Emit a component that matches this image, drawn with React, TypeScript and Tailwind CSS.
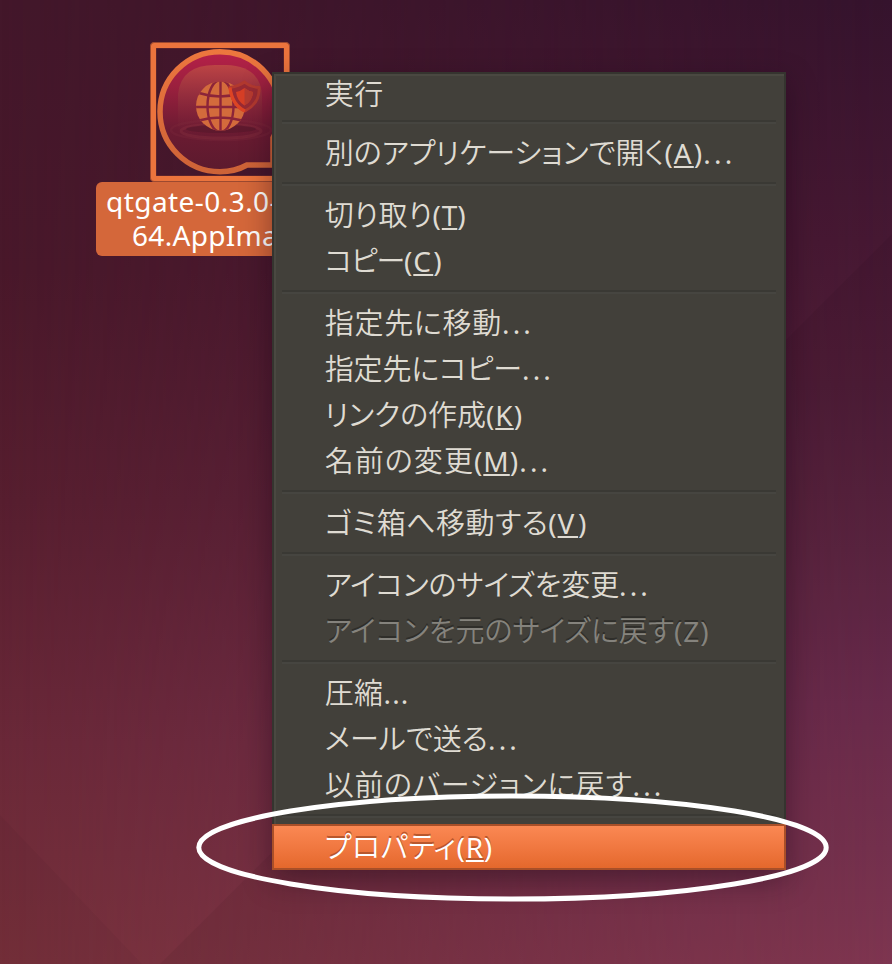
import { useLayoutEffect, useRef } from "react";

type Row = {
  jp: string;
  end: number;
  key?: string;
  keyWidth?: number;
  dots?: "wide" | "tight";
  state?: "first" | "disabled" | "active";
};

const TEXT_LEFT = 324.7;

const groups: Row[][] = [
  [{ jp: "実行", end: 384, state: "first" }],
  [{ jp: "別のアプリケーションで開く", end: 664.5, key: "A", keyWidth: 20, dots: "wide" }],
  [
    { jp: "切り取り", end: 432.5, key: "T", keyWidth: 15.5 },
    { jp: "コピー", end: 404, key: "C", keyWidth: 20 },
  ],
  [
    { jp: "指定先に移動", end: 502, dots: "wide" },
    { jp: "指定先にコピー", end: 522, dots: "wide" },
    { jp: "リンクの作成", end: 486, key: "K", keyWidth: 18.5 },
    { jp: "名前の変更", end: 474, key: "M", keyWidth: 26.5, dots: "wide" },
  ],
  [{ jp: "ゴミ箱へ移動する", end: 548.3, key: "V", keyWidth: 20.5 }],
  [
    { jp: "アイコンのサイズを変更", end: 619, dots: "wide" },
    { jp: "アイコンを元のサイズに戻す", end: 674, key: "Z", keyWidth: 17, state: "disabled" },
  ],
  [
    { jp: "圧縮", end: 383.5, dots: "tight" },
    { jp: "メールで送る", end: 488, dots: "wide" },
    { jp: "以前のバージョンに戻す", end: 632.5, dots: "wide" },
  ],
  [{ jp: "プロパティ", end: 456.5, key: "R", keyWidth: 18, state: "active" }],
];

/* Spreads its characters evenly so that the run takes up the given width. */
function Fit({ text, width, className = "" }: { text: string; width: number; className?: string }) {
  const ref = useRef<HTMLSpanElement>(null);
  useLayoutEffect(() => {
    const el = ref.current;
    if (!el) return;
    const apply = () => {
      el.style.letterSpacing = "0px";
      const natural = el.getBoundingClientRect().width;
      el.style.letterSpacing = `${(width - natural) / text.length}px`;
    };
    apply();
    document.fonts.ready.then(apply);
  }, [text, width]);
  return (
    <span ref={ref} className={`inline-block whitespace-nowrap ${className}`}>
      {text}
    </span>
  );
}

const latin = "font-['Noto_Sans',sans-serif] text-[28px]";

function MenuRow({ row }: { row: Row }) {
  const tone =
    row.state === "disabled"
      ? "text-[#85837d] [text-shadow:0_-2px_0_#2f2e2a]"
      : row.state === "active"
        ? "text-white border-2 border-[#a94f28] bg-linear-to-b from-[#fb8853] to-[#e5682c] [text-shadow:0_-2px_0_#b9572c]"
        : "text-[#dfdbd2]";
  const box =
    row.state === "active"
      ? "h-[46px] pl-[50.7px] leading-[39px]"
      : row.state === "first"
        ? "h-[42px] pl-[52.7px] leading-[40px]"
        : "h-[46px] pl-[52.7px] leading-[43px]";
  return (
    <div className={`flex shrink-0 items-baseline ${box} ${tone}`}>
      <Fit
        text={row.jp}
        width={row.end - TEXT_LEFT}
        className="font-['Noto_Sans_CJK_JP',sans-serif] text-[29px] font-[350] [font-feature-settings:'palt']"
      />
      {row.key && (
        <>
          <Fit text="(" width={9.3} className={latin} />
          <Fit
            text={row.key}
            width={row.keyWidth ?? 18}
            className={`${latin} ${row.state === "disabled" ? "" : "underline decoration-2 underline-offset-[2px] [text-decoration-skip-ink:none]"}`}
          />
          <Fit text=")" width={9.5} className={latin} />
        </>
      )}
      {row.dots === "wide" && <Fit text="..." width={32} className={latin} />}
      {row.dots === "tight" && <Fit text="..." width={26} className={latin} />}
    </div>
  );
}

function Separator() {
  return (
    <div className="flex h-4 shrink-0 flex-col px-[10px] pt-[6px]">
      <div className="h-[2px] bg-[#3a3934]" />
      <div className="h-[2px] bg-[#464540]" />
    </div>
  );
}

function AppIcon() {
  return (
    <svg className="absolute left-[150px] top-[42px]" width="140" height="140" viewBox="150 42 140 140" fill="none">
      <defs>
        <linearGradient id="disc" x1="0" y1="48" x2="0" y2="175" gradientUnits="userSpaceOnUse">
          <stop offset="0" stopColor="#b9204a" />
          <stop offset="0.3" stopColor="#9b203e" />
          <stop offset="0.65" stopColor="#6b1b32" />
          <stop offset="1" stopColor="#5a1a2d" />
        </linearGradient>
        <linearGradient id="dome" x1="0" y1="64" x2="0" y2="136" gradientUnits="userSpaceOnUse">
          <stop offset="0" stopColor="#bd4545" />
          <stop offset="0.45" stopColor="#932f3d" stopOpacity="0.85" />
          <stop offset="1" stopColor="#6b1e33" stopOpacity="0" />
        </linearGradient>
        <linearGradient id="ring" x1="0" y1="48" x2="0" y2="175" gradientUnits="userSpaceOnUse">
          <stop offset="0" stopColor="#ed773e" />
          <stop offset="1" stopColor="#cc6237" />
        </linearGradient>
        <clipPath id="globe">
          <circle cx="220.5" cy="106" r="24.5" />
        </clipPath>
      </defs>
      <rect x="153" y="45" width="134" height="134" rx="1.5" stroke="#9c4930" strokeWidth="6.5" />
      <rect x="153.5" y="45.5" width="133" height="133" rx="1" stroke="#eb743d" strokeWidth="5" />
      <path
        d="M273 165 V138 Q280 126 280 111.7 A60 60 0 1 0 220 171.7 Q235 171.7 247 165 H276"
        fill="url(#disc)"
        stroke="url(#ring)"
        strokeWidth="5.5"
      />
      <path d="M178 136 V94 Q181 65 215 65 H226 Q261 66 262 96 V136 Z" fill="url(#dome)" />
      <ellipse cx="221" cy="131" rx="40" ry="7" stroke="#87303f" strokeWidth="3" opacity="0.4" />
      <ellipse cx="221" cy="130" rx="50" ry="10" stroke="#87303f" strokeWidth="2.5" opacity="0.2" />
      <ellipse cx="221" cy="129" rx="35" ry="4" fill="#59182c" opacity="0.75" />
      <circle cx="220.5" cy="106" r="24.5" fill="#d36b3c" />
      <g clipPath="url(#globe)" stroke="#8c2439" strokeWidth="2.4">
        <path d="M220.5 80V132M195 107H246M199 93Q220 100 242 93M199 120.500Q220 114.500 242 120.500" />
        <ellipse cx="220.5" cy="106" rx="13" ry="26" />
      </g>
      <path
        d="M230 87.500 Q239 86 244.500 82 Q250 87 259 87.500 Q260 103 245 111 Q232 105 230 87.500Z"
        fill="#982a33"
        stroke="#b2392f"
        strokeWidth="2.800"
      />
      <path d="M230 87.500 Q232 105 245 111" stroke="#dd4424" strokeWidth="3.200" />
      <path d="M236 92 Q241 91 244.500 88 Q248 91 253 92 Q252.500 101 244.500 105.500 Q237 101 236 92Z" fill="#d63f26" />
      <path d="M244.500 88 Q248 91 253 92 Q252.500 101 244.500 105.500Z" fill="#b53b30" />
    </svg>
  );
}

export default function App() {
  return (
    <main className="relative h-[964px] w-[892px] overflow-hidden bg-[#50192d]">
      <div className="absolute inset-0 bg-[linear-gradient(180deg,#43172a_0%,#49182a_28%,#571e2f_52%,#6a2838_77%,#76303a_100%)]" />
      <div className="absolute inset-0 bg-[linear-gradient(180deg,#35132d_0%,#461833_25%,#4f1d38_40%,#5d2543_57%,#6e2d4f_73%,#7a3352_88%,#853855_100%)] [mask-image:linear-gradient(90deg,transparent,black)]" />
      <div className="absolute inset-0 bg-black/[0.05] [clip-path:polygon(892px_234px,892px_964px,160px_964px)]" />
      <div className="absolute inset-0 bg-black/[0.03] [clip-path:polygon(0px_815px,142px_964px,0px_964px)]" />

      <AppIcon />
      <div className="absolute left-[96px] top-[182px] h-[74px] w-[248px] rounded-[6px] bg-[#d4673a] pt-[2px] font-['Noto_Sans',sans-serif] text-[28px] leading-[34px] text-white">
        <div className="flex pl-[10px]">
          <Fit text="qtgate-0.3.0-" width={173} />
        </div>
        <div className="flex pl-[36px]">
          <Fit text="64.AppIma" width={146} />
        </div>
      </div>

      <nav className="absolute left-[272px] top-[72px] flex h-[798px] w-[514px] flex-col overflow-hidden bg-[#42403a]">
        {groups.map((rows, i) => (
          <div key={i} className="flex shrink-0 flex-col">
            {i > 0 && <Separator />}
            {rows.map((row) => (
              <MenuRow key={row.jp} row={row} />
            ))}
          </div>
        ))}
      </nav>
      <div className="pointer-events-none absolute left-[272px] top-[72px] h-[752px] w-[514px] border-2 border-b-0 border-[#35342f] shadow-[inset_2px_2px_0_#4a4841]" />
      <div className="pointer-events-none absolute left-[272px] top-[72px] h-[798px] w-[514px] shadow-[0_10px_28px_rgba(20,5,20,0.4)]" />

      <svg className="absolute left-0 top-0" width="892" height="964" fill="none">
        <ellipse cx="512.5" cy="847.5" rx="313.7" ry="51.5" stroke="white" strokeWidth="5" />
      </svg>
    </main>
  );
}
